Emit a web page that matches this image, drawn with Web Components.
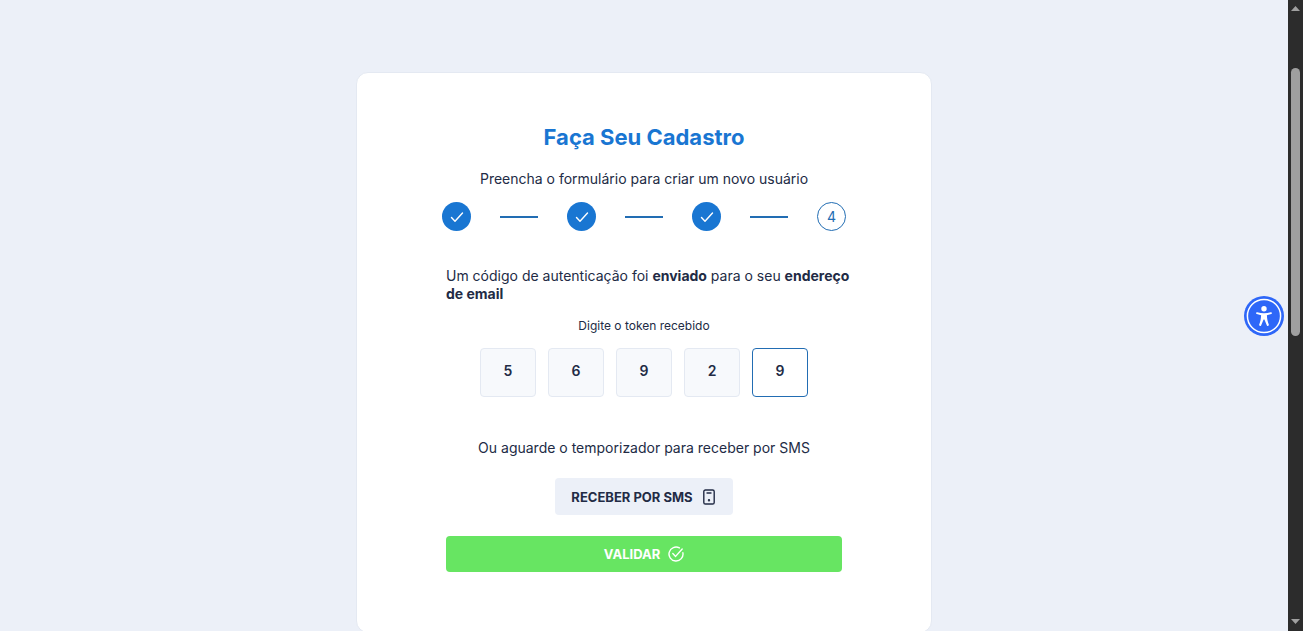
<!DOCTYPE html>
<html lang="pt-BR">
<head>
<meta charset="utf-8">
<meta name="viewport" content="width=device-width, initial-scale=1">
<title>Faça Seu Cadastro</title>
<style>
  :root {
    --blue: #1976d2;
    --blue-dark: #226db3;
    --ink: #222b45;
    --page: #ecf0f8;
    --green: #67e562;
  }
  body {
    margin: 0;
    font-family: Inter, "Liberation Sans", sans-serif;
    font-size: 14px;
    line-height: 18px;
    color: var(--ink);
    background: var(--page);
  }
</style>
</head>
<body>
<app-shell>
  <signup-card heading="Faça Seu Cadastro" subtitle="Preencha o formulário para criar um novo usuário">
    <step-list slot="steps" total="4" current="4"></step-list>
    <span>Um código de autenticação foi <b>enviado</b> para o seu <b>endereço de email</b></span>
    <token-input slot="token" label="Digite o token recebido" value="56929"></token-input>
    <span slot="hint">Ou aguarde o temporizador para receber por SMS</span>
    <action-button slot="actions" icon="phone">RECEBER POR SMS</action-button>
    <action-button slot="actions" icon="check" primary>VALIDAR</action-button>
  </signup-card>
  <access-badge slot="badge"></access-badge>
  <scroll-rail slot="rail"></scroll-rail>
</app-shell>

<script>
function define(name, render) {
  customElements.define(name, class extends HTMLElement {
    constructor() {
      super();
      this.attachShadow({ mode: 'open' });
    }

    connectedCallback() {
      this.shadowRoot.innerHTML = '<style>* { box-sizing: border-box; }</style>' + render(this);
    }
  });
}

define('app-shell', () => `
<style>
  :host {
    display: flex;
    height: 100vh;
    overflow: hidden;
  }
  main {
    flex: 1;
    min-width: 0;
    padding: 72px 16px;
    overflow: hidden;
  }
</style>
<main><slot></slot></main>
<slot name="badge"></slot>
<slot name="rail"></slot>
`);

define('signup-card', el => `
<style>
  :host {
    display: block;
    max-width: 576px;
    margin: 0 auto;
    box-sizing: border-box;
    padding: 48px 16px 60px;
    background: #fff;
    border: 1px solid #e4e9f2;
    border-radius: 12px;
  }
  header {
    text-align: center;
  }
  h1 {
    margin: 0 0 17px;
    font-size: 22px;
    line-height: 32px;
    font-weight: 700;
    color: var(--blue);
  }
  p {
    margin: 0;
  }
  header p {
    margin-bottom: 14px;
  }
  .body {
    display: flex;
    flex-direction: column;
    max-width: 396px;
    margin: 36px auto 0;
  }
  .message {
    margin-right: -12px;
  }
  .hint {
    margin: 42px 0 21px;
    text-align: center;
  }
  .actions {
    display: flex;
    flex-direction: column;
    align-items: center;
    gap: 21px;
  }
</style>
<header>
  <h1>${el.getAttribute('heading')}</h1>
  <p>${el.getAttribute('subtitle')}</p>
  <slot name="steps"></slot>
</header>
<div class="body">
  <p class="message"><slot></slot></p>
  <slot name="token"></slot>
  <p class="hint"><slot name="hint"></slot></p>
  <div class="actions"><slot name="actions"></slot></div>
</div>
`);

define('step-list', el => {
  const total = Number(el.getAttribute('total'));
  const current = Number(el.getAttribute('current'));
  const items = [];
  for (let i = 1; i <= total; i++) {
    if (i > 1) items.push('<li class="line"></li>');
    items.push(i < current
      ? '<li class="done"><svg width="14" height="14" viewBox="0 0 14 14"><path d="M1.5 7.5 5 11.2 12.5 3"/></svg></li>'
      : `<li class="now">${i}</li>`);
  }
  return `
<style>
  :host {
    display: block;
  }
  ol {
    display: flex;
    justify-content: center;
    align-items: center;
    gap: 29px;
    margin: 0;
    padding: 0;
    list-style: none;
  }
  .done, .now {
    display: flex;
    align-items: center;
    justify-content: center;
    width: 29px;
    height: 29px;
    border-radius: 50%;
  }
  .done {
    background: var(--blue);
  }
  .now {
    border: 1px solid var(--blue-dark);
    color: var(--blue-dark);
  }
  .line {
    width: 38px;
    height: 2px;
    background: var(--blue-dark);
  }
  path {
    fill: none;
    stroke: #fff;
    stroke-width: 1.4;
    stroke-linecap: round;
    stroke-linejoin: round;
  }
</style>
<ol>${items.join('')}</ol>`;
});

define('token-input', el => `
<style>
  :host {
    display: block;
    margin-top: 14px;
  }
  fieldset {
    margin: 0;
    padding: 0;
    border: 0;
  }
  legend {
    width: 100%;
    padding: 0;
    margin-bottom: 13px;
    font-size: 12px;
    text-align: center;
  }
  .cells {
    display: flex;
    justify-content: center;
    gap: 12px;
  }
  input {
    width: 56px;
    height: 49px;
    padding: 0 0 4px;
    border: 1px solid #e4e9f2;
    border-radius: 4px;
    background: #f7f9fc;
    color: inherit;
    font: 600 14px/24px Inter, "Liberation Sans", sans-serif;
    text-align: center;
    outline: none;
  }
  input:last-child {
    border-color: var(--blue-dark);
    background: #fff;
  }
</style>
<fieldset>
  <legend>${el.getAttribute('label')}</legend>
  <div class="cells">
    ${[...el.getAttribute('value')].map((digit, i) =>
      `<input inputmode="numeric" maxlength="1" aria-label="Dígito ${i + 1}" value="${digit}">`).join('')}
  </div>
</fieldset>
`);

const icons = {
  phone: `<rect x="2.8" y="1" width="10.4" height="14" rx="1.6"/><path d="M6 4h4"/><circle cx="8" cy="11.3" r=".5"/>`,
  check: `<path d="M14.9 6.8A7 7 0 1 1 11.4 1.9"/><path d="M4.8 7.6 7.6 10.4 14.2 3"/>`
};

define('action-button', el => `
<style>
  :host {
    display: block;
  }
  :host([primary]) {
    align-self: stretch;
  }
  button {
    display: flex;
    align-items: center;
    justify-content: center;
    gap: 8px;
    width: 100%;
    height: 37px;
    padding: 0 16px;
    border: 0;
    border-radius: 4px;
    background: var(--page);
    color: var(--ink);
    font: 700 13px/16px Inter, "Liberation Sans", sans-serif;
    cursor: pointer;
  }
  :host([primary]) button {
    height: 36px;
    background: var(--green);
    color: #fff;
  }
  svg {
    fill: none;
    stroke: currentColor;
    stroke-width: 1.4;
    stroke-linecap: round;
    stroke-linejoin: round;
  }
</style>
<button type="button">
  <slot></slot>
  <svg width="16" height="16" viewBox="0 0 16 16">${icons[el.getAttribute('icon')]}</svg>
</button>
`);

// floating accessibility shortcut
define('access-badge', () => `
<style>
  :host {
    position: fixed;
    right: 19px;
    top: 50%;
    transform: translateY(-50%);
  }
  button {
    display: block;
    padding: 0;
    border: 0;
    border-radius: 50%;
    background: none;
    cursor: pointer;
  }
  svg {
    display: block;
  }
</style>
<button type="button" aria-label="Acessibilidade">
  <svg width="40" height="40" viewBox="0 0 40 40">
    <circle cx="20" cy="20" r="20" fill="#2e67f8"/>
    <circle cx="20" cy="20" r="16.6" fill="none" stroke="#fff" stroke-width="1.5"/>
    <circle cx="20" cy="12.7" r="2.7" fill="#fff"/>
    <path d="M13.2 16.2c4.4 1.3 9.2 1.3 13.6 0 1.2-.3 1.6 1.5.4 1.9l-4.3 1.1c.1 3.6.8 6.7 1.9 9.4.5 1.3-1.4 2-1.9.8L20.4 23.6h-.8l-2.5 5.8c-.5 1.2-2.4.5-1.9-.8 1.1-2.7 1.8-5.8 1.9-9.4l-4.3-1.1c-1.2-.4-.8-2.2.4-1.9z" fill="#fff"/>
  </svg>
</button>
`);

define('scroll-rail', () => `
<style>
  :host {
    display: grid;
    grid-template-rows: 68px 268px 1fr;
    justify-items: center;
    flex: none;
    width: 15px;
    background: #2c2c2c;
  }
  svg {
    display: block;
    fill: #a0a0a0;
  }
  .up {
    margin-top: 5px;
  }
  .down {
    align-self: end;
    margin-bottom: 6px;
  }
  .thumb {
    width: 9px;
    border-radius: 5px;
    background: #9f9f9f;
  }
</style>
<svg class="up" width="9" height="6" viewBox="0 0 9 6"><path d="M0 6 4.5 1 9 6z"/></svg>
<div class="thumb"></div>
<svg class="down" width="9" height="6" viewBox="0 0 9 6"><path d="M0 0h9L4.5 5z"/></svg>
`);
</script>
</body>
</html>
